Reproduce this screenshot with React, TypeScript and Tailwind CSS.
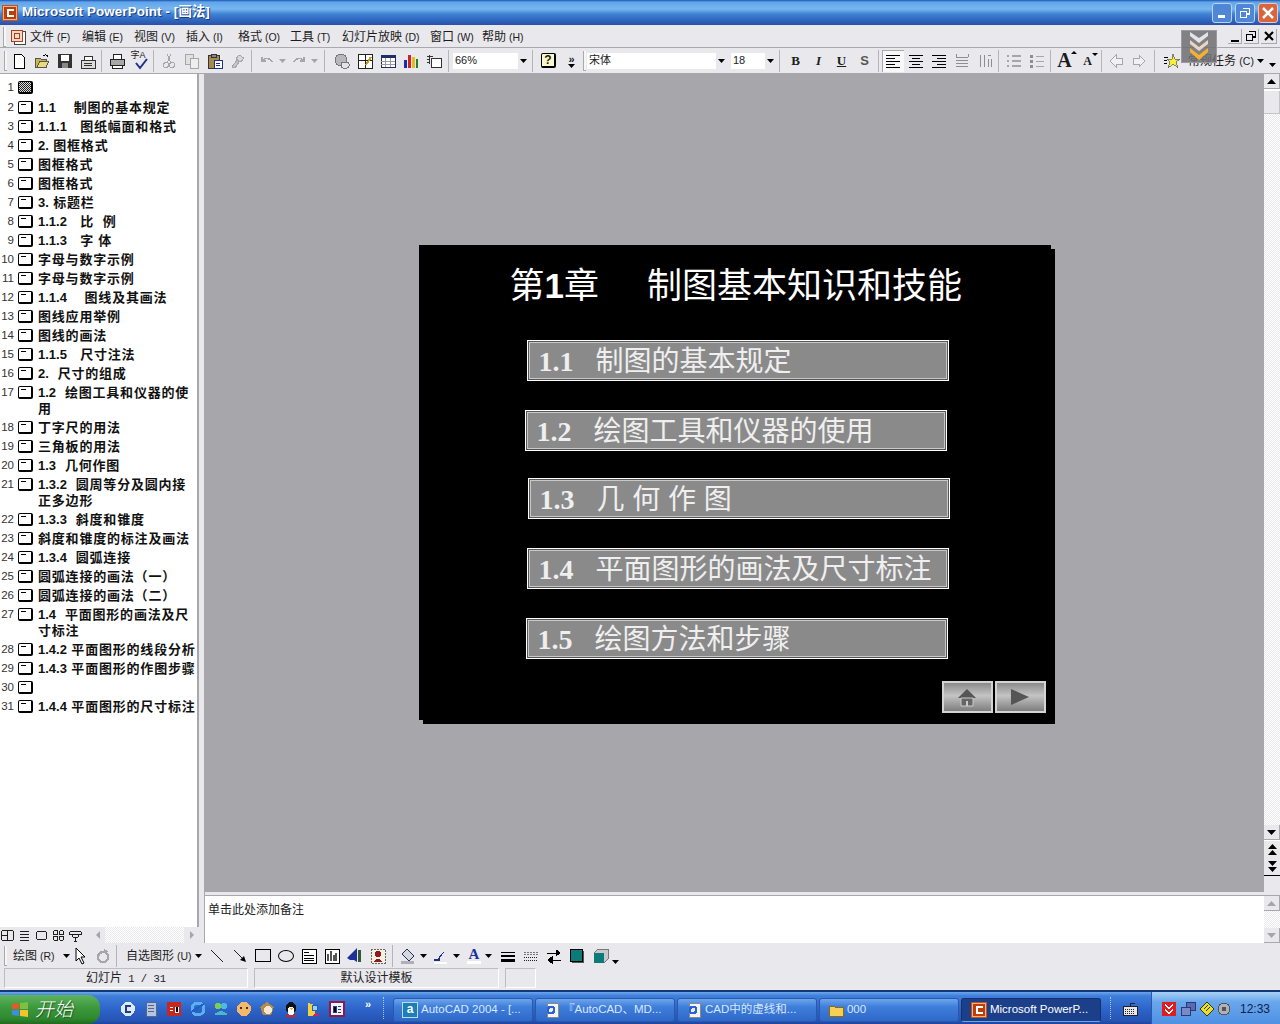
import type { ReactNode } from 'react';

const HATCH = 'bg-[repeating-conic-gradient(#e9e8ec_0_25%,#ffffff_0_50%)] bg-[length:2px_2px]';

function Ico({ children, size = 16 }: { children: ReactNode; size?: number }) {
  return (
    <svg width={size} height={size} viewBox="0 0 16 16" shapeRendering="crispEdges">
      {children}
    </svg>
  );
}

function Tool({ children, w = 'w-[23px]' }: { children?: ReactNode; w?: string }) {
  return <div className={`${w} h-[22px] shrink-0 flex items-center justify-center`}>{children}</div>;
}

function Sep({ w }: { w: string }) {
  return (
    <div className={`${w} h-[22px] shrink-0 flex justify-center`}>
      <div className="w-[2px] h-full border-l border-[#b5b4b9] border-r-white" />
    </div>
  );
}

function Grip() {
  return <div className="w-[3px] h-[20px] shrink-0 border-l border-[#a9a8ad] border-b bg-white/60" />;
}

function Caret({ color = '#000' }: { color?: string }) {
  return (
    <svg width="7" height="4" viewBox="0 0 7 4" className="shrink-0">
      <path d="M0 0h7L3.5 4z" fill={color} />
    </svg>
  );
}

function Combo({ w, label, btn = 'w-[10px]' }: { w: string; label: string; btn?: string }) {
  return (
    <div className={`${w} h-[16px] shrink-0 bg-white flex items-center justify-between text-[11px] text-[#222]`}>
      <span className="pl-[2px]">{label}</span>
      <span className={`${btn} h-full bg-[#e9e8ec] flex items-center justify-center`}>
        <Caret />
      </span>
    </div>
  );
}

function SquareArrow({ up, dim, h = 'h-[15px]' }: { up?: boolean; dim?: boolean; h?: string }) {
  const c = dim ? '#a6a5aa' : '#000';
  return (
    <div className={`w-[16px] ${h} shrink-0 bg-[#e9e8ec] border-r border-b border-[#a9a8ad] border-t-white flex items-center justify-center`}>
      <svg width="9" height="5" viewBox="0 0 9 5">
        <path d={up ? 'M4.5 0L9 5H0z' : 'M0 0h9L4.500 5z'} fill={c} />
      </svg>
    </div>
  );
}

function DoubleArrow({ up }: { up?: boolean }) {
  return (
    <div className="w-[16px] h-[17px] shrink-0 bg-[#e9e8ec] flex items-center justify-center">
      <svg width="9" height="11" viewBox="0 0 9 11">
        <path d={up ? 'M4.500 0L9 5H0zM4.500 6L9 11H0z' : 'M0 0h9L4.500 5zM0 6h9L4.500 11z'} fill="#000" />
      </svg>
    </div>
  );
}

function PptIcon({ size = 16 }: { size?: number }) {
  return (
    <svg width={size} height={size} viewBox="0 0 16 16" shapeRendering="crispEdges">
      <rect width="16" height="16" fill="#c8501c" />
      <rect x="1" y="1" width="14" height="14" fill="#f4b183" />
      <rect x="2" y="2" width="12" height="12" fill="#b8400f" />
      <path d="M5 4h7v2H7v4h5v2H5z" fill="#fff" />
    </svg>
  );
}

function SlideThumb({ first }: { first?: boolean }) {
  return (
    <div className={`w-[15px] h-[13px] shrink-0 rounded-[2px] border border-black border-r-2 border-b-2 relative ${first ? 'bg-[repeating-conic-gradient(#222_0_25%,#ddd_0_50%)] bg-[length:2px_2px]' : 'bg-white'}`}>
      {!first && <div className="absolute left-[2px] top-[2px] w-[5px] h-px bg-black" />}
    </div>
  );
}

// numbers stay untracked, only the Chinese part is spaced out
function OutlineText({ text }: { text: string }) {
  const m = text.match(/^([\d.]+)(.*)$/);
  if (!m) return <>{text}</>;
  return (
    <>
      <span className="tracking-normal">{m[1]}</span>
      {m[2]}
    </>
  );
}

const outline: { n: number; text?: string; cont?: string; first?: boolean }[] = [
  { n: 1, first: true },
  { n: 2, text: '1.1\u00a0\u00a0\u00a0\u00a0制图的基本规定' },
  { n: 3, text: '1.1.1\u00a0\u00a0\u00a0图纸幅面和格式' },
  { n: 4, text: '2. 图框格式' },
  { n: 5, text: '图框格式' },
  { n: 6, text: '图框格式' },
  { n: 7, text: '3. 标题栏' },
  { n: 8, text: '1.1.2\u00a0\u00a0\u00a0比\u00a0\u00a0例' },
  { n: 9, text: '1.1.3\u00a0\u00a0\u00a0字 体' },
  { n: 10, text: '字母与数字示例' },
  { n: 11, text: '字母与数字示例' },
  { n: 12, text: '1.1.4\u00a0\u00a0\u00a0\u00a0图线及其画法' },
  { n: 13, text: '图线应用举例' },
  { n: 14, text: '图线的画法' },
  { n: 15, text: '1.1.5\u00a0\u00a0\u00a0尺寸注法' },
  { n: 16, text: '2.\u00a0\u00a0尺寸的组成' },
  { n: 17, text: '1.2\u00a0\u00a0绘图工具和仪器的使', cont: '用' },
  { n: 18, text: '丁字尺的用法' },
  { n: 19, text: '三角板的用法' },
  { n: 20, text: '1.3\u00a0\u00a0几何作图' },
  { n: 21, text: '1.3.2\u00a0\u00a0圆周等分及圆内接', cont: '正多边形' },
  { n: 22, text: '1.3.3\u00a0\u00a0斜度和锥度' },
  { n: 23, text: '斜度和锥度的标注及画法' },
  { n: 24, text: '1.3.4\u00a0\u00a0圆弧连接' },
  { n: 25, text: '圆弧连接的画法（一）' },
  { n: 26, text: '圆弧连接的画法（二）' },
  { n: 27, text: '1.4\u00a0\u00a0平面图形的画法及尺', cont: '寸标注' },
  { n: 28, text: '1.4.2 平面图形的线段分析' },
  { n: 29, text: '1.4.3 平面图形的作图步骤' },
  { n: 30 },
  { n: 31, text: '1.4.4 平面图形的尺寸标注' },
];

const chapters = [
  { num: '1.1', text: '制图的基本规定', cls: 'ml-[108px] mt-[15px]' },
  { num: '1.2', text: '绘图工具和仪器的使用', cls: 'ml-[106px] mt-[29px]' },
  { num: '1.3', text: '几 何 作 图', cls: 'ml-[109px] mt-[27px]' },
  { num: '1.4', text: '平面图形的画法及尺寸标注', cls: 'ml-[108px] mt-[29px]' },
  { num: '1.5', text: '绘图方法和步骤', cls: 'ml-[107px] mt-[29px]' },
];

const menus = [
  ['文件', 'F'],
  ['编辑', 'E'],
  ['视图', 'V'],
  ['插入', 'I'],
  ['格式', 'O'],
  ['工具', 'T'],
  ['幻灯片放映', 'D'],
  ['窗口', 'W'],
  ['帮助', 'H'],
];

const tasks = [
  { label: 'AutoCAD 2004 - [...', icon: 'a' },
  { label: '『AutoCAD、MD...', icon: 'e' },
  { label: 'CAD中的虚线和...', icon: 'e' },
  { label: '000', icon: 'f' },
];

function TaskIcon({ kind }: { kind: string }) {
  if (kind === 'a')
    return (
      <div className="w-[16px] h-[16px] bg-[#1c7fb5] border border-[#b7dcf0] text-white text-[12px] font-bold leading-[13px] text-center shrink-0">a</div>
    );
  if (kind === 'f')
    return (
      <Ico>
        <path d="M1 4h5l1 1h8v9H1z" fill="#f6cf57" stroke="#8a6a12" />
      </Ico>
    );
  return (
    <Ico>
      <rect x="3" y="1" width="11" height="14" fill="#f4f4f4" stroke="#888" />
      <circle cx="7" cy="8" r="4.500" fill="#2a62d8" />
      <circle cx="7" cy="8" r="2" fill="#e8eefc" />
    </Ico>
  );
}

export default function App() {
  return (
    <div className="w-[1280px] h-[1024px] overflow-hidden flex flex-col bg-[#e9e8ec] text-[12px] text-[#1c1c1c] [font-family:'Liberation_Sans','Noto_Sans_CJK_SC',sans-serif]">
      {/* Title bar */}
      <div className="h-[26px] shrink-0 flex items-center pl-[2px] pr-[2px] border-b border-[#e9e8ec] bg-[linear-gradient(#1f52b5_0,#5fa5ea_2px,#79b6ef_9px,#3f82d4_14px,#2f68bf_20px,#2b4fa8_100%)]">
        <PptIcon />
        <span className="ml-[4px] text-white text-[13.400px] font-bold tracking-[0.1px] [text-shadow:1px_1px_0_#1a3a80]">Microsoft PowerPoint - [画法]</span>
        <div className="ml-auto flex gap-[3px]">
          <div className="w-[20px] h-[20px] rounded-[3px] border border-[#b8d2f2] bg-[#4f86d6] flex items-end pl-[5px] pb-[4px]">
            <div className="w-[7px] h-[3px] bg-white" />
          </div>
          <div className="w-[20px] h-[20px] rounded-[3px] border border-[#b8d2f2] bg-[#4f86d6] flex items-center justify-center">
            <Ico size={14}>
              <path d="M6 3h7v6h-3M3 6h7v7H3z" fill="none" stroke="#fff" strokeWidth="1.500" />
            </Ico>
          </div>
          <div className="w-[20px] h-[20px] rounded-[3px] border border-[#f0c8b8] bg-[#d9653f] flex items-center justify-center">
            <svg width="12" height="12" viewBox="0 0 12 12">
              <path d="M1 1l10 10M11 1L1 11" stroke="#fff" strokeWidth="2.500" />
            </svg>
          </div>
        </div>
      </div>

      {/* Menu bar */}
      <div className="h-[22px] shrink-0 flex items-center pl-[3px] pr-[2px] relative border-b border-[#a9a8ad]">
        <Grip />
        <div className="w-[24px] flex justify-center">
          <Ico>
            <rect x="4" y="2" width="11" height="13" fill="#fff" stroke="#444" />
            <rect x="1" y="1" width="11" height="11" fill="#f2d9c8" stroke="#a8401a" />
            <rect x="4" y="4" width="5" height="5" fill="none" stroke="#a8401a" />
          </Ico>
        </div>
        {menus.map(([name, key]) => (
          <span key={name} className={`${key === 'D' ? 'w-[88px]' : 'w-[52px]'} shrink-0 text-[12px] whitespace-nowrap`}>
            {name}<span className="text-[10.500px]"> ({key})</span>
          </span>
        ))}
        <div className="ml-auto flex gap-[2px] mr-[1px]">
          <div className="w-[14px] h-[15px] flex items-end justify-center pb-[1px] border-r border-b border-[#a9a8ad]">
            <div className="w-[8px] h-[2px] bg-black" />
          </div>
          <div className="w-[15px] h-[15px] flex items-center justify-center border-r border-b border-[#a9a8ad]">
            <Ico size={12}>
              <path d="M5 2h9v7h-3M2 6h8v8H2z" fill="none" stroke="#000" strokeWidth="2" />
            </Ico>
          </div>
          <div className="w-[16px] h-[15px] flex items-center justify-center border-r border-b border-[#a9a8ad]">
            <svg width="10" height="10" viewBox="0 0 10 10">
              <path d="M1 1l8 8M9 1L1 9" stroke="#000" strokeWidth="2.200" />
            </svg>
          </div>
        </div>
        {/* floating download overlay */}
        <div className="absolute left-[1181px] top-[4px] w-[36px] h-[33px] bg-[#6e6d72]/85 border border-[#9a9a9e] flex flex-col items-center z-10">
          <svg width="24" height="31" viewBox="0 0 24 31">
            <path d="M3 1l9 6 9-6v4l-9 7-9-7z" fill="#e4e4e6" />
            <path d="M3 9l9 7 9-7v4l-9 7-9-7z" fill="#e8d6c0" />
            <path d="M3 17l9 7 9-7v4l-9 8-9-8z" fill="#f4b030" />
          </svg>
        </div>
      </div>

      {/* Standard + formatting toolbar */}
      <div className="h-[26px] shrink-0 flex items-center pl-[4px] border-b border-[#a9a8ad]">
        <Grip />
        <Tool>
          <Ico><path d="M3 1h7l3 3v11H3z" fill="#fff" stroke="#000" /></Ico>
        </Tool>
        <Tool>
          <Ico>
            <path d="M1 5h5l1 1h5v8H1z" fill="#c8b84a" stroke="#555" />
            <path d="M3 14l3-6h9l-3 6z" fill="#e8dc7a" stroke="#555" />
            <path d="M9 3c2-2 4-1 5 1" fill="none" stroke="#000" />
          </Ico>
        </Tool>
        <Tool>
          <Ico>
            <rect x="1" y="1" width="14" height="14" fill="#333" />
            <rect x="4" y="2" width="8" height="6" fill="#fff" />
            <rect x="5" y="10" width="6" height="5" fill="#888" />
          </Ico>
        </Tool>
        <Tool>
          <Ico>
            <path d="M4 7V3h8v4" fill="#fff" stroke="#333" />
            <rect x="1" y="7" width="14" height="8" fill="#dcdcdc" stroke="#333" />
            <path d="M4 10h8M4 12h8" stroke="#333" />
          </Ico>
        </Tool>
        <Sep w="w-[6px]" />
        <Tool>
          <Ico>
            <path d="M4 1h8v5H4z" fill="#fff" stroke="#222" />
            <path d="M1 6h14v6H1z" fill="#a8a8a8" stroke="#222" />
            <path d="M3 12h10v3H3z" fill="#fff" stroke="#222" />
          </Ico>
        </Tool>
        <Tool>
          <div className="relative w-[18px] h-[18px]">
            <span className="absolute left-0 top-[-2px] text-[9px] leading-[10px]">字A</span>
            <svg width="18" height="18" viewBox="0 0 18 18" className="absolute left-0 top-0">
              <path d="M5 11l4 5 7-9" fill="none" stroke="#1c2f8a" strokeWidth="2" />
            </svg>
          </div>
        </Tool>
        <Sep w="w-[6px]" />
        <Tool>
          <Ico>
            <circle cx="5" cy="12" r="2.500" fill="none" stroke="#a6a5aa" />
            <circle cx="11" cy="12" r="2.500" fill="none" stroke="#a6a5aa" />
            <path d="M6 10l4-9M10 10L6 1" stroke="#a6a5aa" />
          </Ico>
        </Tool>
        <Tool>
          <Ico>
            <rect x="1" y="1" width="8" height="10" fill="#e0e0e0" stroke="#a6a5aa" />
            <rect x="6" y="5" width="8" height="10" fill="#eee" stroke="#a6a5aa" />
          </Ico>
        </Tool>
        <Tool>
          <Ico>
            <rect x="1" y="2" width="11" height="13" fill="#a58a50" stroke="#333" />
            <rect x="4" y="1" width="5" height="3" fill="#888" stroke="#333" />
            <rect x="7" y="7" width="8" height="8" fill="#fff" stroke="#1c2f8a" />
            <path d="M9 10h4M9 12h4" stroke="#1c2f8a" />
          </Ico>
        </Tool>
        <Tool>
          <Ico>
            <path d="M9 2l5 3-3 4-5-3z" fill="#d8d8d8" stroke="#a6a5aa" />
            <path d="M7 7l-5 7 3 1 4-6z" fill="#c8c8cc" stroke="#a6a5aa" />
          </Ico>
        </Tool>
        <Sep w="w-[6px]" />
        <Tool w="w-[34px]">
          <div className="flex items-center gap-[4px]">
            <Ico><path d="M3 8c3-4 8-3 10 1M3 4v4h4" fill="none" stroke="#a6a5aa" strokeWidth="1.500" /></Ico>
            <Caret color="#a6a5aa" />
          </div>
        </Tool>
        <Tool w="w-[31px]">
          <div className="flex items-center gap-[4px]">
            <Ico><path d="M13 8c-3-4-8-3-10 1M13 4v4H9" fill="none" stroke="#a6a5aa" strokeWidth="1.500" /></Ico>
            <Caret color="#a6a5aa" />
          </div>
        </Tool>
        <Sep w="w-[10px]" />
        <Tool>
          <Ico>
            <circle cx="7" cy="7" r="6" fill="#b8b8bc" stroke="#77767b" />
            <rect x="7" y="9" width="8" height="6" rx="2" fill="#e4e4e8" stroke="#77767b" />
          </Ico>
        </Tool>
        <Tool>
          <Ico>
            <rect x="1" y="1" width="14" height="14" fill="#fff" stroke="#222" />
            <path d="M1 7h14M8 1v14" stroke="#222" />
            <path d="M9 12l5-8" stroke="#c0a020" strokeWidth="2" />
          </Ico>
        </Tool>
        <Tool>
          <Ico>
            <rect x="1" y="2" width="14" height="12" fill="#fff" stroke="#1c2f6a" />
            <rect x="1" y="2" width="14" height="3" fill="#1c2f6a" />
            <path d="M1 8h14M1 11h14M5 5v9M10 5v9" stroke="#9a9a9e" />
          </Ico>
        </Tool>
        <Tool>
          <Ico>
            <rect x="1" y="7" width="3" height="8" fill="#1c2fa8" />
            <rect x="5" y="2" width="3" height="13" fill="#d02020" />
            <rect x="9" y="4" width="3" height="11" fill="#e0c020" />
            <rect x="13" y="6" width="2" height="9" fill="#208030" />
          </Ico>
        </Tool>
        <Tool>
          <Ico>
            <rect x="5" y="5" width="10" height="9" fill="#fff" stroke="#333" />
            <path d="M1 3h6M1 6h3M1 9h3M3 2v9" stroke="#333" />
          </Ico>
        </Tool>
        <Sep w="w-[8px]" />
        <Combo w="w-[75px]" label="66%" />
        <Sep w="w-[9px]" />
        <Tool>
          <div className="w-[15px] h-[15px] rounded-[2px] bg-[#fbf8c8] border border-black border-r-2 border-b-2 text-[12px] font-bold leading-[12px] text-center">?</div>
        </Tool>
        <Tool w="w-[23px]">
          <div className="flex flex-col items-center">
            <span className="text-[11px] font-bold leading-[10px]">»</span>
            <Caret />
          </div>
        </Tool>
        <Grip />
        <div className="w-[1px] shrink-0" />
        <Combo w="w-[139px]" label="宋体" />
        <div className="w-[5px] shrink-0" />
        <Combo w="w-[44px]" label="18" />
        <Sep w="w-[9px]" />
        <Tool><span className="text-[13px] font-bold [font-family:'Liberation_Serif',serif]">B</span></Tool>
        <Tool><span className="text-[13px] font-bold italic [font-family:'Liberation_Serif',serif]">I</span></Tool>
        <Tool><span className="text-[13px] font-bold underline [font-family:'Liberation_Serif',serif]">U</span></Tool>
        <Tool><span className="text-[13px] font-bold text-[#555]">S</span></Tool>
        <Sep w="w-[5px]" />
        <Tool>
          <div className="w-[22px] h-[22px] bg-white/70 border-l border-t border-[#a9a8ad] flex items-center justify-center">
            <Ico><path d="M1 2h14M1 5h9M1 8h14M1 11h9M1 14h14" stroke="#000" /></Ico>
          </div>
        </Tool>
        <Tool>
          <Ico><path d="M1 2h14M4 5h8M1 8h14M4 11h8M1 14h14" stroke="#000" /></Ico>
        </Tool>
        <Tool>
          <Ico><path d="M1 2h14M6 5h9M1 8h14M6 11h9M1 14h14" stroke="#000" /></Ico>
        </Tool>
        <Tool>
          <Ico><path d="M2 1v3M14 1v3M2 4h12M2 7h12M2 10h12M2 13h12" stroke="#8e8d92" /></Ico>
        </Tool>
        <Tool>
          <Ico><path d="M3 2v12M7 2v12M11 6v8M14 6v8M11 2h3" stroke="#8e8d92" /></Ico>
        </Tool>
        <Sep w="w-[6px]" />
        <Tool>
          <Ico><path d="M1 3h2M1 8h2M1 13h2M6 3h9M6 8h9M6 13h9" stroke="#a6a5aa" strokeWidth="1.500" /></Ico>
        </Tool>
        <Tool>
          <Ico><path d="M1 3h3M1 8h3M1 13h3" stroke="#8e8d92" strokeWidth="3" /><path d="M7 3h8M7 8h8M7 13h8" stroke="#a6a5aa" /></Ico>
        </Tool>
        <Sep w="w-[5px]" />
        <Tool>
          <div className="relative">
            <span className="text-[20px] font-bold leading-[20px] [font-family:'Liberation_Serif',serif]">A</span>
            <span className="absolute right-[-5px] top-[1px] w-0 h-0 border-x-[3px] border-x-transparent border-b-[3px] border-b-black" />
          </div>
        </Tool>
        <Tool>
          <div className="relative">
            <span className="text-[12px] font-bold leading-[12px] [font-family:'Liberation_Serif',serif]">A</span>
            <span className="absolute right-[-6px] top-[1px] w-0 h-0 border-x-[3px] border-x-transparent border-t-[3px] border-t-black" />
          </div>
        </Tool>
        <Sep w="w-[5px]" />
        <Tool>
          <Ico><path d="M2 8l6-6v3h6v6H8v3z" fill="#f1f0f3" stroke="#a6a5aa" /></Ico>
        </Tool>
        <Tool>
          <Ico><path d="M14 8L8 2v3H2v6h6v3z" fill="#f1f0f3" stroke="#a6a5aa" /></Ico>
        </Tool>
        <Sep w="w-[10px]" />
        <Tool>
          <div className="relative">
            <Ico>
              <path d="M0 4h4M0 7h3M0 10h3" stroke="#000" />
              <path d="M9 1l2 5h5l-4 3 2 6-5-4-5 4 2-6-3-3h5z" fill="#f7ee3a" stroke="#555" strokeWidth="0.700" />
            </Ico>
          </div>
        </Tool>
        <span className="text-[12px] whitespace-nowrap ml-[5px] mr-[2px] w-[67px] shrink-0">常规任务 <span className="text-[10.500px]">(C)</span></span>
        <Caret />
        <div className="ml-[5px] mt-[8px]">
          <Caret />
        </div>
      </div>

      {/* Main */}
      <div className="flex-1 min-h-0 flex">
        {/* Left outline pane */}
        <div className="w-[205px] shrink-0 flex flex-col pr-[5px] border-r border-[#a8a7ab]">
          <div className="flex-1 min-h-0 pt-[4px] overflow-hidden bg-white border-r-2 border-[#a8a7ab] font-bold text-[13px] tracking-[0.8px] text-[#111]">
            {outline.map((row) => (
              <div key={row.n} className={`flex ${row.cont ? 'h-[35px]' : row.n === 1 ? 'h-[20px]' : 'h-[19px]'}`}>
                <span className="w-[14px] shrink-0 text-right font-normal tracking-normal text-[11.500px] leading-[19px] text-[#333]">{row.n}</span>
                <div className="w-[19px] h-[19px] shrink-0 flex items-center justify-center pl-[3px]">
                  <SlideThumb first={row.first} />
                </div>
                <div className="pl-[5px] leading-[19px] whitespace-nowrap">
                  {row.text && <OutlineText text={row.text} />}
                  {row.cont && <div className="leading-[15px] -mt-[1px]">{row.cont}</div>}
                </div>
              </div>
            ))}
          </div>
          <div className="h-[16px] shrink-0 flex bg-white">
            <div className="w-[90px] shrink-0 bg-[#e9e8ec] flex items-center gap-[2px] pl-[1px]">
              {[
                <path key="a" d="M1 3h12v10H1zM7 3v10M1 8h6" fill="none" stroke="#111" />,
                <path key="b" d="M2 4h10M2 7h10M2 10h10M2 13h10" stroke="#111" />,
                <rect key="c" x="2" y="4" width="10" height="8" rx="1" fill="none" stroke="#111" />,
                <path key="d" d="M2 3h4v4H2zM8 3h4v4H8zM2 9h4v4H2zM8 9h4v4H8z" fill="none" stroke="#111" />,
                <path key="e" d="M1 4h12v3H1zM4 7h6v3H4zM7 10v4M5 14h4" fill="none" stroke="#111" />,
              ].map((icon, i) => (
                <Ico key={i} size={15}>{icon}</Ico>
              ))}
            </div>
            <div className={`flex-1 flex justify-between ${HATCH}`}>
              <div className="w-[15px] h-full bg-[#e9e8ec] flex items-center justify-center">
                <span className="w-0 h-0 border-y-[4px] border-y-transparent border-r-[4px] border-r-[#a6a5aa]" />
              </div>
              <div className="w-[15px] h-full bg-[#e9e8ec] flex items-center justify-center">
                <span className="w-0 h-0 border-y-[4px] border-y-transparent border-l-[4px] border-l-[#a6a5aa]" />
              </div>
            </div>
          </div>
        </div>

        {/* Slide + notes */}
        <div className="flex-1 min-w-0 flex flex-col">
          <div className="flex-1 min-h-0 flex">
            <div className="flex-1 min-w-0 bg-[#a7a6ab] flex items-center justify-center">
              <div className="w-[632px] h-[475px] shrink-0 mb-[2px] bg-black shadow-[4px_4px_0_#000] flex flex-col">
                <div className="h-[80px] shrink-0 flex items-center pl-[91px] pt-[4px] text-[35px] text-white whitespace-nowrap">
                  <span>第</span>
                  <span className="font-bold">1</span>
                  <span>章</span>
                  <span className="ml-[48px]">制图基本知识和技能</span>
                </div>
                {chapters.map((c) => (
                  <div key={c.num} className={`${c.cls} w-[422px] h-[41px] shrink-0 border border-white bg-[#8a8a8a] shadow-[inset_0_0_0_1px_#555,inset_0_0_0_2px_#c8c8c8] flex items-center pl-[11px] pt-[4px] text-[#efefef] text-[28px] whitespace-nowrap`}>
                    <span className="w-[57px] shrink-0 font-bold text-[28px] [font-family:'Liberation_Serif',serif]">{c.num}</span>
                    <span>{c.text}</span>
                  </div>
                ))}
                <div className="mt-[22px] mr-[5px] self-end flex gap-[2px]">
                  <div className="w-[51px] h-[32px] border-2 border-[#d4d4d4] bg-[linear-gradient(#8a8a8a,#c4c4c4_45%,#7e7e7e)] flex items-center justify-center">
                    <svg width="20" height="20" viewBox="0 0 20 20">
                      <path d="M10 2l9 9H1z" fill="#555" />
                      <path d="M4 11h12v8H4z" fill="#666" stroke="#ccc" />
                      <rect x="9" y="14" width="2" height="5" fill="#ccc" />
                    </svg>
                  </div>
                  <div className="w-[51px] h-[32px] border-2 border-[#d4d4d4] bg-[linear-gradient(#8a8a8a,#c4c4c4_45%,#7e7e7e)] flex items-center justify-center">
                    <svg width="22" height="18" viewBox="0 0 22 18">
                      <path d="M2 1l18 8-18 8z" fill="#555" />
                    </svg>
                  </div>
                </div>
              </div>
            </div>
            {/* Slide scrollbar */}
            <div className="w-[16px] shrink-0 flex flex-col">
              <SquareArrow up />
              <div className="h-[2px] shrink-0 bg-white" />
              <div className="h-[23px] shrink-0 bg-[#e9e8ec] border-r border-b border-[#c4c3c8]" />
              <div className={`flex-1 ${HATCH}`} />
              <SquareArrow />
              <div className="h-px shrink-0 bg-white" />
              <DoubleArrow up />
              <DoubleArrow />
              <div className="h-[17px] shrink-0 bg-[#e9e8ec] border-t border-black" />
            </div>
          </div>
          <div className="h-[4px] shrink-0 bg-[#e9e8ec] border-b border-[#a8a7ab]" />
          <div className="h-[47px] shrink-0 flex bg-white">
            <div className="flex-1 pl-[3px] pt-[6px] text-[12px] leading-[16px] text-[#222]">单击此处添加备注</div>
            <div className={`w-[16px] shrink-0 flex flex-col justify-between ${HATCH}`}>
              <SquareArrow up dim />
              <SquareArrow dim />
            </div>
          </div>
        </div>
      </div>

      {/* Drawing toolbar */}
      <div className="h-[25px] shrink-0 flex items-center pl-[4px]">
        <Grip />
        <div className="w-[6px] shrink-0" />
        <span className="text-[12px] whitespace-nowrap w-[50px] shrink-0">绘图<span className="text-[10.500px]"> (R)</span></span>
        <Caret />
        <div className="w-[1px] shrink-0" />
        <Tool w="w-[20px]">
          <svg width="12" height="18" viewBox="0 0 12 18">
            <path d="M1 1v13l3-3 3 6 2-1-3-6h4z" fill="#fff" stroke="#000" />
          </svg>
        </Tool>
        <Tool w="w-[23px]">
          <Ico><circle cx="8" cy="9" r="5" fill="none" stroke="#a6a5aa" strokeWidth="2.500" /><path d="M9 1l4 2-3 3z" fill="#a6a5aa" /></Ico>
        </Tool>
        <Sep w="w-[5px]" />
        <span className="text-[12px] whitespace-nowrap ml-[7px] w-[69px] shrink-0">自选图形<span className="text-[10.500px]"> (U)</span></span>
        <Caret />
        <div className="w-[3px] shrink-0" />
        <Tool>
          <svg width="14" height="14" viewBox="0 0 14 14"><path d="M1 1l12 12" stroke="#222" /></svg>
        </Tool>
        <Tool>
          <svg width="14" height="14" viewBox="0 0 14 14"><path d="M1 1l10 10" stroke="#222" /><path d="M13 13L7 11l4-4z" fill="#000" /></svg>
        </Tool>
        <Tool><div className="w-[16px] h-[13px] border border-black" /></Tool>
        <Tool><div className="w-[16px] h-[12px] rounded-[50%] border border-black" /></Tool>
        <Tool>
          <Ico>
            <rect x="1" y="1" width="14" height="14" fill="#fff" stroke="#000" />
            <path d="M3 4h5M3 7h10M3 10h10M3 12h10" stroke="#000" />
          </Ico>
        </Tool>
        <Tool>
          <Ico>
            <rect x="1" y="1" width="14" height="14" fill="#fff" stroke="#000" />
            <path d="M4 13V6M7 13V3M10 13V7M12 13V5" stroke="#555" strokeWidth="1.500" />
          </Ico>
        </Tool>
        <Tool>
          <svg width="17" height="17" viewBox="0 0 17 17">
            <path d="M11 1v14l-3-2H4L1 11z" fill="#1c2f9a" />
            <path d="M12 3h3v12h-3z" fill="#2e5a2e" />
          </svg>
        </Tool>
        <Tool>
          <Ico>
            <rect x="1" y="1" width="14" height="14" fill="#f5efe0" stroke="#666" strokeDasharray="2 1" />
            <circle cx="8" cy="6" r="3" fill="#8a1c1c" />
            <path d="M4 14c1-4 7-4 8 0z" fill="#8a1c1c" />
          </Ico>
        </Tool>
        <Sep w="w-[8px]" />
        <Tool w="w-[33px]">
          <div className="flex items-center gap-[4px]">
            <Ico><path d="M7 1l7 7-5 5-7-7z" fill="#d8d8da" stroke="#1c2f6a" /><rect x="1" y="13" width="13" height="3" fill="#b0afb4" /></Ico>
            <Caret />
          </div>
        </Tool>
        <Tool w="w-[33px]">
          <div className="flex items-center gap-[4px]">
            <Ico><path d="M13 1L7 10 5 12l1-4z" fill="#1c2f8a" /><path d="M1 12h6" stroke="#1c2f8a" strokeWidth="2" /><rect x="1" y="14" width="13" height="2" fill="#fff" /></Ico>
            <Caret />
          </div>
        </Tool>
        <Tool w="w-[33px]">
          <div className="flex items-center gap-[4px]">
            <div className="flex flex-col items-center">
              <span className="text-[15px] font-bold leading-[13px] text-[#1c2f9a] [font-family:'Liberation_Serif',serif]">A</span>
              <span className="w-[14px] h-[3px] bg-white" />
            </div>
            <Caret />
          </div>
        </Tool>
        <Tool>
          <Ico><path d="M1 4h14" stroke="#000" strokeWidth="1" /><path d="M1 8h14" stroke="#000" strokeWidth="2" /><path d="M1 12h14" stroke="#000" strokeWidth="3" /></Ico>
        </Tool>
        <Tool>
          <Ico><path d="M1 4h14M1 6h14" stroke="#777" strokeDasharray="2 1" /><path d="M1 9h14M1 12h14" stroke="#222" strokeDasharray="1 1" /></Ico>
        </Tool>
        <Tool>
          <Ico>
            <path d="M1 5h12M10 2l4 3-4 3z" stroke="#000" fill="#000" />
            <path d="M15 12H3M6 9l-4 3 4 3z" stroke="#000" fill="#000" />
          </Ico>
        </Tool>
        <Tool>
          <Ico>
            <rect x="3" y="3" width="12" height="12" fill="#555" />
            <rect x="1" y="1" width="12" height="12" fill="#0b7a78" stroke="#000" />
          </Ico>
        </Tool>
        <Tool w="w-[36px]">
          <div className="flex items-end gap-[3px]">
            <Ico>
              <path d="M1 5l4-4h10v10l-4 4z" fill="#c8c8cc" stroke="#777" />
              <rect x="1" y="5" width="10" height="10" fill="#0b7a78" />
            </Ico>
            <Caret />
          </div>
        </Tool>
      </div>

      {/* Status bar */}
      <div className="h-[22px] shrink-0 flex gap-[6px] pl-[4px] pb-[2px] text-[12px] text-[#222]">
        <div className="w-[244px] border border-[#bdbcc1] border-r-white border-b-white text-center leading-[19px]">
          幻灯片<span className="text-[10.500px] [font-family:'Liberation_Mono',monospace]"> 1 / 31</span>
        </div>
        <div className="w-[245px] border border-[#bdbcc1] border-r-white border-b-white text-center leading-[19px]">默认设计模板</div>
        <div className="w-[31px] border border-[#bdbcc1] border-r-white border-b-white" />
      </div>

      {/* Taskbar */}
      <div className="h-[34px] shrink-0 flex items-end border-t-[2px] border-[#123a70] bg-[linear-gradient(#6ea6ea_0,#3f7fdc_12%,#2d63c8_55%,#2554b4_90%,#1c44a0_100%)] text-white text-[11.500px]">
        <div className="w-[100px] h-[29px] shrink-0 rounded-r-[12px] bg-[linear-gradient(#5fb45f,#3f9a3f_40%,#2f8a2f_80%,#1f6a1f)] flex items-center pl-[11px] gap-[6px]">
          <svg width="18" height="18" viewBox="0 0 18 18">
            <path d="M1 3l7-1v6H1z" fill="#e8572a" />
            <path d="M9 2l8-1v7H9z" fill="#7cc242" />
            <path d="M1 9h7v6l-7-1z" fill="#3a8fe0" />
            <path d="M9 9h8v7l-8-1z" fill="#f4c430" />
          </svg>
          <span className="text-[19px] italic font-light leading-none [text-shadow:1px_1px_1px_#1f4f1f]">开始</span>
        </div>
        <div className="w-[16px] shrink-0" />
        <div className="h-full flex items-center pt-[2px]">
          {[
            <><circle cx="8" cy="8" r="7" fill="#dfe8f5" /><path d="M11 5H6v6h5" fill="none" stroke="#1c3f8a" strokeWidth="2" /></>,
            <><rect x="3" y="1" width="10" height="14" fill="#b8c4dc" stroke="#54688f" /><path d="M5 4h6M5 7h6M5 10h6" stroke="#54688f" /></>,
            <><rect x="1" y="1" width="14" height="14" fill="#c8281c" /><path d="M4 6h3M4 9h3M9 6v5h3V6" stroke="#fff" /></>,
            <><circle cx="8" cy="8" r="6" fill="none" stroke="#5db0f0" strokeWidth="3" /><path d="M1 11L14 3" stroke="#1c5fc8" strokeWidth="2" /></>,
            <><circle cx="5" cy="5" r="3" fill="#7cd04a" /><circle cx="11" cy="5" r="3" fill="#4ab8e8" /><path d="M2 14c0-5 12-5 12 0z" fill="#4ab8c8" /></>,
            <><circle cx="8" cy="8" r="7" fill="#f4b86a" /><circle cx="5" cy="7" r="1.500" fill="#4a2a10" /><circle cx="11" cy="7" r="1.500" fill="#4a2a10" /></>,
            <><path d="M1 6l7-5 7 5-3 8H4z" fill="#b88a4a" /><circle cx="9" cy="9" r="4" fill="#f5e8d0" /></>,
            <><ellipse cx="8" cy="7" rx="5" ry="6" fill="#111" /><ellipse cx="8" cy="10" rx="3.500" ry="4" fill="#fff" /><path d="M3 14h10v2H3z" fill="#e02020" /><path d="M6 7h4l-2 2z" fill="#f4b020" /></>,
            <><path d="M2 2l7 2v11H2z" fill="#f4d040" /><circle cx="9" cy="7" r="3" fill="#9ad0f4" stroke="#1c5fc8" /><path d="M9 12l6 3H7z" fill="#d02060" /></>,
            <><rect x="1" y="1" width="14" height="14" fill="#f5f0f5" stroke="#8a1c4a" strokeWidth="2" /><path d="M4 5h3v6H4zM9 5h3M9 8h3M9 11h3" stroke="#1c3f9a" /></>,
          ].map((icon, i) => (
            <div key={i} className="w-[23.300px] flex justify-center">
              <Ico>{icon}</Ico>
            </div>
          ))}
        </div>
        <div className="h-full ml-[16px] w-[18px] shrink-0 flex items-center text-[11px] font-bold leading-none pb-[8px]">»</div>
        <div className="h-full w-[5px] shrink-0 flex items-center">
          <div className="w-[2px] h-[22px] border-l border-dotted border-[#a8c8f0]" />
        </div>
        <div className="h-full flex items-center gap-[2px] pl-[5px] pt-[4px]">
          {tasks.map((t) => (
            <div key={t.label} className="w-[140px] h-[24px] shrink-0 rounded-[3px] bg-[linear-gradient(#6ea6ea,#3f7fdc_35%,#2f68c8)] border border-[#2a58ac] flex items-center gap-[3px] pl-[8px] whitespace-nowrap text-[#dbe7fa]">
              <TaskIcon kind={t.icon} />
              <span>{t.label}</span>
            </div>
          ))}
          <div className="w-[140px] h-[24px] shrink-0 rounded-[3px] bg-[#1c3f8a] border border-[#16306c] border-b-[#6ea6ea] flex items-center gap-[3px] pl-[9px] whitespace-nowrap">
            <PptIcon />
            <span>Microsoft PowerP...</span>
          </div>
        </div>
        <div className="h-full w-[21px] shrink-0 flex justify-center items-center">
          <div className="w-[2px] h-[22px] border-l border-dotted border-[#a8c8f0]" />
        </div>
        <div className="h-full w-[21px] shrink-0 flex items-center pt-[2px]">
          <Ico>
            <rect x="1" y="5" width="14" height="9" fill="#e8e8e8" stroke="#222" />
            <path d="M3 8h10M3 10h10M3 12h10" stroke="#222" strokeDasharray="1 1" />
            <path d="M8 5V2h5" fill="none" stroke="#222" />
          </Ico>
        </div>
        <div className="ml-auto h-full w-[129px] shrink-0 bg-[linear-gradient(#a8d0f4,#6aa8ec_30%,#4f90e4)] border-l border-[#2a58ac] flex items-center pl-[9px] pt-[2px] gap-[3px] text-[#10204a]">
          <Ico>
            <rect x="1" y="1" width="14" height="14" fill="#e01c1c" />
            <path d="M4 3l4 3 4-3v2L8 8 4 5zM4 8l4 3 4-3v2l-4 3-4-3z" fill="#fff" />
          </Ico>
          <Ico>
            <rect x="6" y="1" width="9" height="8" fill="#5a6ab0" stroke="#2a3a78" />
            <rect x="1" y="6" width="9" height="8" fill="#7a8ac8" stroke="#2a3a78" />
          </Ico>
          <Ico>
            <path d="M8 1l7 7-7 7-7-7z" fill="#e8e020" stroke="#333" />
            <path d="M5 8l4-4M7 10l4-4" stroke="#333" />
          </Ico>
          <div className="-ml-[3px]">
            <Ico>
              <circle cx="9" cy="8" r="6" fill="#b0b0b8" stroke="#555" />
              <circle cx="9" cy="8" r="2.500" fill="#555" />
            </Ico>
          </div>
          <span className="ml-[6px] text-[12px]">12:33</span>
        </div>
      </div>
    </div>
  );
}
